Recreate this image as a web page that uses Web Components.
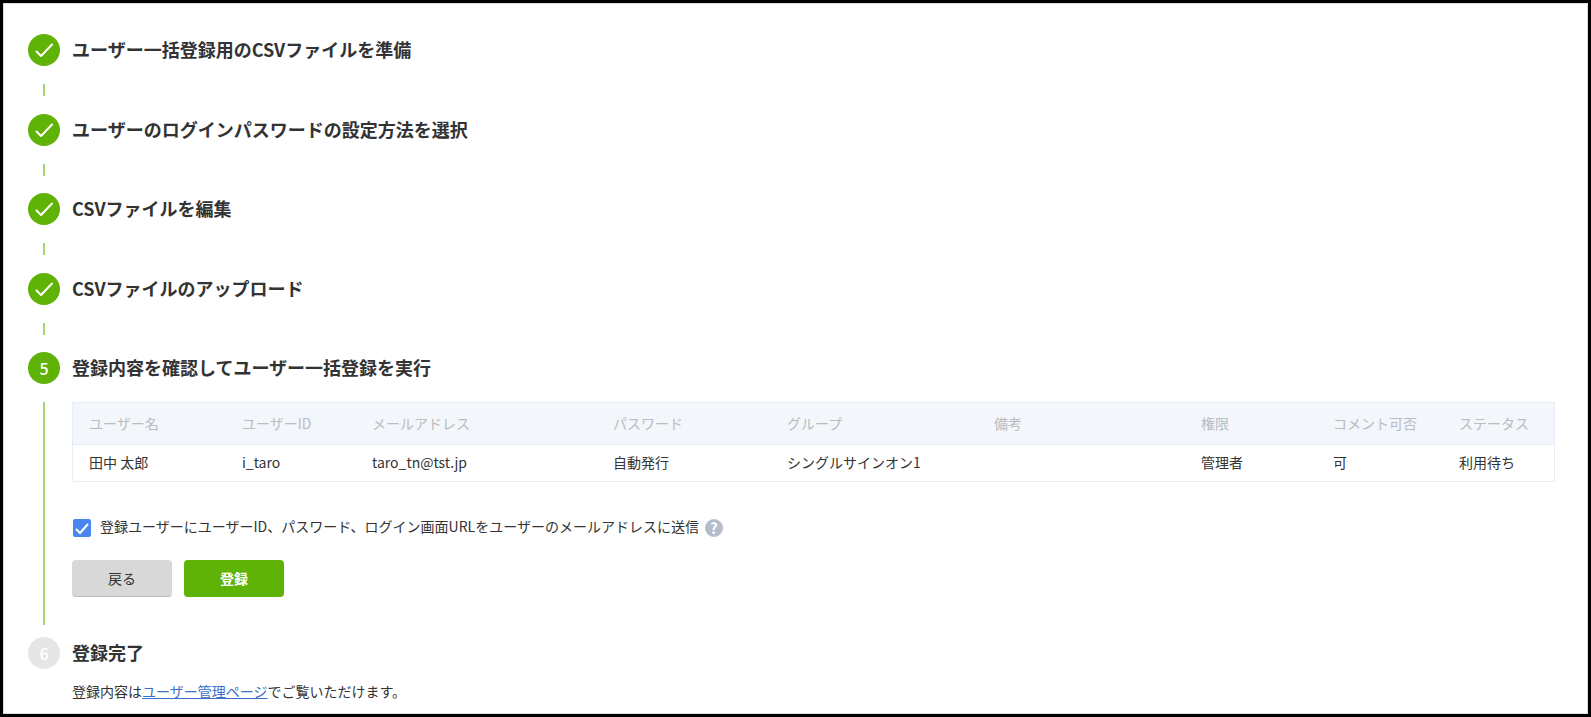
<!DOCTYPE html>
<html lang="ja"><head><meta charset="utf-8"><style>
html,body{margin:0;padding:0;background:#fff}
body{font-family:"Noto Sans CJK JP","Noto Sans",sans-serif;color:#333}
</style></head><body>
<wizard-page>
<wizard-step state="done" label="ユーザー一括登録用のCSVファイルを準備"></wizard-step>
<wizard-gap></wizard-gap>
<wizard-step state="done" label="ユーザーのログインパスワードの設定方法を選択"></wizard-step>
<wizard-gap></wizard-gap>
<wizard-step state="done" label="CSVファイルを編集"></wizard-step>
<wizard-gap></wizard-gap>
<wizard-step state="done" label="CSVファイルのアップロード"></wizard-step>
<wizard-gap></wizard-gap>
<wizard-step state="active" num="5" label="登録内容を確認してユーザー一括登録を実行"></wizard-step>
<wizard-body>
<user-table></user-table>
<send-check>登録ユーザーにユーザーID、パスワード、ログイン画面URLをユーザーのメールアドレスに送信</send-check>
<div style="display:flex;gap:12px;margin-top:23px">
<app-button>戻る</app-button><app-button primary>登録</app-button>
</div>
</wizard-body>
<wizard-step state="todo" num="6" label="登録完了"></wizard-step>
<finish-note></finish-note>
</wizard-page>
<script>
function def(name,html,init){customElements.define(name,class extends HTMLElement{
connectedCallback(){if(this.shadowRoot)return;const r=this.attachShadow({mode:'open'});r.innerHTML=html;if(init)init.call(this,r)}})}
def('wizard-page',`<style>:host{display:block;box-sizing:border-box;width:1591px;height:717px;border:3px solid #000;box-shadow:inset 0 0 0 1px #ddd;padding:31px 33px 0 25px;overflow:hidden;background:#fff}</style><slot></slot>`);
def('wizard-step',`<style>:host{display:flex;align-items:center;gap:12px;height:32px}
.c{width:32px;height:32px;border-radius:50%;background:#5fb306;color:#fff;display:flex;align-items:center;justify-content:center;font-size:16px;font-weight:500;flex:none}
:host([state=todo]) .c{background:#e6e6e6}
.t{font-size:18px;font-weight:700;color:#333;line-height:30px;height:32px;white-space:nowrap}
svg{display:block}</style><div class="c"></div><div class="t"></div>`,function(r){
r.querySelector('.t').textContent=this.getAttribute('label');
const c=r.querySelector('.c');
if(this.getAttribute('state')==='done')c.innerHTML='<svg width="32" height="32" viewBox="0 0 32 32" fill="none" stroke="#fff" stroke-width="2" stroke-linecap="round" stroke-linejoin="round"><path d="M8.5 17.5 L13 22 L24 10.5"/></svg>';
else c.textContent=this.getAttribute('num');});
def('wizard-gap',`<style>:host{display:block;height:47.5px}
i{display:block;width:2px;height:12px;background:#a6d66f;margin-left:15px;position:relative;top:18px}</style><i></i>`);
def('wizard-body',`<style>:host{display:block;margin:18px 0 12px 15px;border-left:2px solid #a6d66f;padding:0 0 28px 27px}</style><slot></slot>`);
const cols=[153,130,241,174,207,207,132,126,113];
const heads=['ユーザー名','ユーザーID','メールアドレス','パスワード','グループ','備考','権限','コメント可否','ステータス'];
const vals=['田中 太郎','i_taro','taro_tn@tst.jp','自動発行','シングルサインオン1','','管理者','可','利用待ち'];
def('user-table',`<style>:host{display:block;border:1px solid #e8eef6}
.r{display:grid;grid-template-columns:${cols.map(c=>c+'px').join(' ')};padding-left:16px;font-size:14px}
.h{background:#f3f6fb;height:41px;line-height:41px;color:#b9bcc0;border-bottom:1px solid #e8eef6}
.b{height:36px;line-height:35px;color:#333}
span{white-space:nowrap}</style>
<div class="r h">${heads.map(h=>`<span>${h}</span>`).join('')}</div>
<div class="r b">${vals.map(h=>`<span>${h}</span>`).join('')}</div>`);
def('send-check',`<style>:host{display:flex;align-items:center;margin-top:36px;height:19px;font-size:14px;color:#333;padding-left:1px}
.b{width:18px;height:18px;border-radius:2px;background:#4a86f0;margin-right:9px;flex:none;display:flex;align-items:center;justify-content:center}
.l{line-height:17px;height:19px}
.q{width:18px;height:18px;border-radius:50%;background:#b5bdcb;color:#fff;font-size:15px;font-weight:700;display:flex;align-items:center;justify-content:center;margin-left:6px;line-height:1}
svg{display:block}
</style><div class="b"><svg width="18" height="18" viewBox="0 0 18 18" fill="none" stroke="#fff" stroke-width="2"><path d="M3 10 L7 14 L15 5"/></svg></div><div class="l"><slot></slot></div><div class="q">?</div>`);
def('app-button',`<style>:host{display:flex;align-items:center;justify-content:center;box-sizing:border-box;width:100px;height:37px;border-radius:4px;background:#d8d8d8;border-bottom:1px solid #bbb;font-size:14px;color:#333}
:host([primary]){background:#5fb306;color:#fff;font-weight:700;border-bottom-color:#5fb306}</style><slot></slot>`);
def('finish-note',`<style>:host{display:block;margin:11px 0 0 44px;font-size:14px;color:#333;line-height:22px}
a{color:#3a6fc9;text-decoration:underline}</style>登録内容は<a href="#">ユーザー管理ページ</a>でご覧いただけます。`);
</script></body></html>
